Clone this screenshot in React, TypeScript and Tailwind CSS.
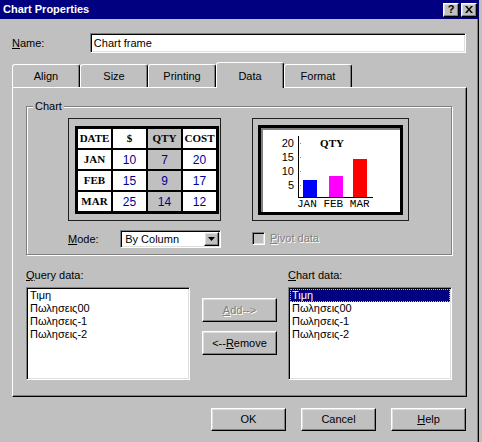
import React from 'react';

const raised =
  'border border-t-white border-l-white border-r-black border-b-black shadow-[inset_-1px_-1px_0_#808080,inset_1px_1px_0_#dfdfdf]';
const sunken =
  'border border-t-[#808080] border-l-[#808080] border-r-white border-b-white shadow-[inset_1px_1px_0_#000,inset_-1px_-1px_0_#dfdfdf]';

interface BtnProps {
  children: React.ReactNode;
  disabled?: boolean;
  className?: string;
}

const Button: React.FC<BtnProps> = ({ children, disabled = false, className = '' }) => (
  <div className={`flex items-center justify-center bg-[#c0c0c0] ${raised} ${className}`}>
    <span className={disabled ? 'text-[#808080] [text-shadow:1px_1px_0_#fff]' : 'text-black'}>{children}</span>
  </div>
);

const tabs = ['Align', 'Size', 'Printing', 'Data', 'Format'];

const table = [
  ['DATE', '$', 'QTY', 'COST'],
  ['JAN', '10', '7', '20'],
  ['FEB', '15', '9', '17'],
  ['MAR', '25', '14', '12'],
];

const items = ['Τιμη', 'Πωλησεις00', 'Πωλησεις-1', 'Πωλησεις-2'];

const DataTable = () => (
  <div className="h-[103px] w-[153px] border border-[#202020] pl-[6px] pt-[7px]">
    <div className="grid w-fit grid-cols-[repeat(4,33px)] grid-rows-[repeat(4,19px)] gap-[2px] border-[3px] border-black bg-black">
      {table.map((row, r) =>
        row.map((cell, c) => {
          const serif = r === 0 || c === 0;
          return (
            <div
              key={`${r}-${c}`}
              className={`flex items-center justify-center ${c === 2 ? 'bg-[#c0c0c0]' : 'bg-white'} ${
                serif
                  ? "font-['Liberation_Serif',serif] text-[11px] font-bold text-black"
                  : 'text-[12px] text-[#00009a]'
              }`}
            >
              {cell}
            </div>
          );
        })
      )}
    </div>
  </div>
);

const ChartPreview = () => (
  <div className="h-[103px] w-[157px] border border-[#202020] pl-[5px] pt-[6px]">
    <div className="h-[90px] w-[145px] border-[3px] border-black bg-white shadow-[inset_2px_2px_0_#808080]">
      <svg width="139" height="84" viewBox="0 0 139 84" className="block">
        {['20', '15', '10', '5'].map((v, i) => (
          <text
            key={v}
            x="33"
            y={19 + i * 14}
            textAnchor="end"
            fontSize="11"
            fontFamily="Liberation Sans, Arial, sans-serif"
            fill="#000"
          >
            {v}
          </text>
        ))}
        {[15, 29, 43, 57].map((y) => (
          <rect key={y} x="39" y={y} width="1" height="1" fill="#808080" />
        ))}
        <rect x="37" y="8" width="1" height="62" fill="#000" />
        <rect x="37" y="69" width="75" height="1" fill="#000" />
        <rect x="42" y="52" width="14" height="17" fill="#0000ff" />
        <rect x="68" y="48" width="14" height="21" fill="#ff00ff" />
        <rect x="92" y="31" width="14" height="38" fill="#ff0000" />
        <text
          x="71"
          y="19"
          textAnchor="middle"
          fontSize="11"
          fontWeight="bold"
          fontFamily="Liberation Serif, serif"
          fill="#000"
        >
          QTY
        </text>
        <text x="36" y="79" fontSize="11" fontFamily="Liberation Mono, monospace" fill="#000">
          JAN FEB MAR
        </text>
      </svg>
    </div>
  </div>
);

const ListBox: React.FC<{ selected?: boolean }> = ({ selected = false }) => (
  <div className={`h-[93px] w-[164px] bg-white ${sunken} p-[1px] leading-[13px]`}>
    {items.map((it, i) =>
      selected && i === 0 ? (
        <div key={it} className="bg-[#000080] px-[2px] text-white outline-1 -outline-offset-1 outline-dotted outline-[#c0c080]">
          {it}
        </div>
      ) : (
        <div key={it} className="px-[2px]">
          {it}
        </div>
      )
    )}
  </div>
);

export default function App() {
  return (
    <div className="h-[442px] w-[482px] overflow-hidden bg-[#c0c0c0] font-['Liberation_Sans',Arial,sans-serif] text-[11px] text-black">
      <div className="flex h-full w-[479px] flex-col">
        {/* title bar */}
        <div className="flex h-[19px] shrink-0 items-center justify-between bg-[#000080] pl-[3px] pr-[2px]">
          <span className="text-[11px] font-bold text-white">Chart Properties</span>
          <div className="flex gap-[2px]">
            <div className={`flex h-[14px] w-[16px] items-center justify-center bg-[#c0c0c0] ${raised} text-[11px] font-bold leading-none`}>
              ?
            </div>
            <div className={`flex h-[14px] w-[16px] items-center justify-center bg-[#c0c0c0] ${raised}`}>
              <svg width="8" height="7" viewBox="0 0 8 7">
                <path d="M0 0h2l2 2.5L6 0h2L5 3.5 8 7H6L4 4.5 2 7H0l3-3.5z" fill="#000" />
              </svg>
            </div>
          </div>
        </div>

        <div className="flex-1 border-r border-r-black px-[12px] shadow-[inset_-1px_0_0_#808080]">
          {/* name row */}
          <div className="mt-[14px] flex h-[20px] items-center">
            <span className="w-[78px]">
              <span className="underline">N</span>ame:
            </span>
            <div className={`flex h-[20px] w-[377px] items-center bg-white pl-[3px] ${sunken}`}>Chart frame</div>
          </div>

          {/* tabs */}
          <div className="mt-[9px] flex h-[25px] items-end">
            {tabs.map((t) =>
              t === 'Data' ? (
                <div
                  key={t}
                  className="relative z-10 -mb-[1px] flex h-[26px] w-[68px] justify-center rounded-t-[3px] border-l border-r border-t border-l-white border-r-black border-t-white bg-[#c0c0c0] pt-[7px] leading-[13px] shadow-[inset_-1px_0_0_#808080]"
                >
                  {t}
                </div>
              ) : (
                <div
                  key={t}
                  className="flex h-[23px] w-[68px] justify-center rounded-t-[3px] border-l border-r border-t border-l-white border-r-black border-t-white pt-[5px] leading-[13px] shadow-[inset_-1px_0_0_#808080]"
                >
                  {t}
                </div>
              )
            )}
          </div>

          {/* panel */}
          <div className="h-[310px] w-[455px] border border-b-black border-l-white border-r-black border-t-white pl-[13px] pt-[18px] shadow-[inset_-1px_-1px_0_#808080]">
            {/* chart group */}
            <div className="relative flex h-[149px] w-[426px] gap-[31px] border border-[#808080] pl-[41px] pt-[11px] shadow-[inset_1px_1px_0_#fff,1px_1px_0_#fff]">
              <span className="absolute -top-[7px] left-[6px] bg-[#c0c0c0] px-[2px] leading-[13px]">Chart</span>
              <div className="flex w-[153px] flex-col">
                <DataTable />
                <div className="mt-[9px] flex h-[18px] items-center">
                  <span className="w-[54px]">
                    <span className="underline">M</span>ode:
                  </span>
                  <div className={`flex h-[18px] w-[104px] items-center justify-between bg-white pl-[4px] pr-[1px] ${sunken}`}>
                    <span>By Column</span>
                    <div className={`flex h-[14px] w-[15px] items-center justify-center bg-[#c0c0c0] ${raised}`}>
                      <svg width="7" height="4" viewBox="0 0 7 4">
                        <path d="M0 0h7L3.5 4z" fill="#000" />
                      </svg>
                    </div>
                  </div>
                </div>
              </div>
              <div className="flex w-[157px] flex-col">
                <ChartPreview />
                <div className="mt-[11px] flex h-[13px] items-center gap-[5px]">
                  <div className={`h-[13px] w-[13px] bg-[#c0c0c0] ${sunken}`} />
                  <span className="text-[#808080] [text-shadow:1px_1px_0_#fff]">
                    <span className="underline">P</span>ivot data
                  </span>
                </div>
              </div>
            </div>

            {/* lists */}
            <div className="mt-[14px] flex">
              <div className="flex w-[164px] flex-col">
                <span className="mb-[5px] leading-[13px]">
                  <span className="underline">Q</span>uery data:
                </span>
                <ListBox />
              </div>
              <div className="ml-[12px] flex w-[75px] flex-col gap-[9px] pt-[29px]">
                <Button disabled className="h-[24px]">
                  <span className="underline">A</span>dd--&gt;
                </Button>
                <Button className="h-[24px]">
                  &lt;--<span className="underline">R</span>emove
                </Button>
              </div>
              <div className="ml-[11px] flex w-[164px] flex-col">
                <span className="mb-[5px] leading-[13px]">
                  <span className="underline">C</span>hart data:
                </span>
                <ListBox selected />
              </div>
            </div>
          </div>

          {/* bottom buttons */}
          <div className="mt-[11px] flex w-[455px] justify-end gap-[15px] pr-[1px]">
            <Button className="h-[23px] w-[75px]">OK</Button>
            <Button className="h-[23px] w-[75px]">Cancel</Button>
            <Button className="h-[23px] w-[75px]">
              <span className="underline">H</span>elp
            </Button>
          </div>
        </div>
      </div>
    </div>
  );
}
